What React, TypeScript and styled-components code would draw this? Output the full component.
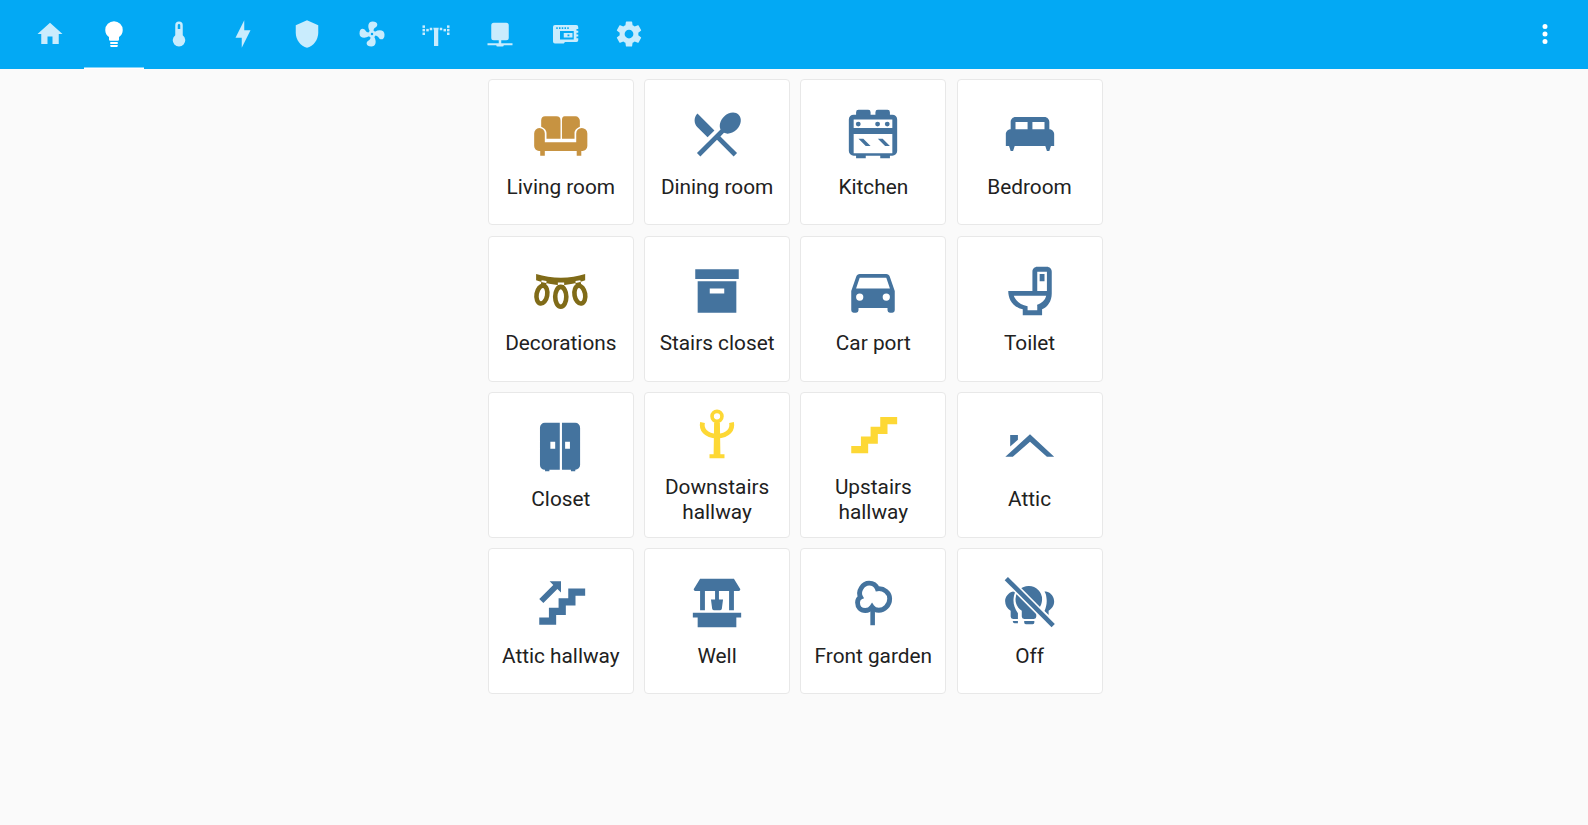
import React from 'react';
import styled, { createGlobalStyle } from 'styled-components';

const Global = createGlobalStyle`
  html, body { margin: 0; padding: 0; height: 100%; background: #fafafa; }
  body { font-family: Roboto, "Liberation Sans", sans-serif; overflow: hidden; }
`;

const Page = styled.div`
  display: flex;
  flex-direction: column;
  min-height: 100vh;
`;

const Toolbar = styled.header`
  display: flex;
  align-items: stretch;
  height: 69px;
  padding: 0 28px 0 20px;
  background: #03a9f4;
  box-sizing: border-box;
`;

const TabList = styled.nav`
  display: flex;
  gap: 4.33px;
`;

const Tab = styled.div<{ $active?: boolean }>`
  display: flex;
  align-items: center;
  justify-content: center;
  width: 60px;
  box-sizing: border-box;
  padding-bottom: 2px;
  color: ${p => (p.$active ? '#ffffff' : '#c9ecfd')};
  box-shadow: ${p => (p.$active ? 'inset 0 -1.5px 0 #ffffff' : 'none')};
`;

const MenuButton = styled.div`
  display: flex;
  align-items: center;
  margin-left: auto;
  padding-bottom: 2px;
  color: #ffffff;
`;

const Grid = styled.main`
  display: grid;
  grid-template-columns: repeat(4, 146px);
  grid-auto-rows: 146px;
  gap: 10.25px;
  justify-content: center;
  padding: 10.3px 0 0 2.4px;
`;

const Card = styled.div`
  display: flex;
  flex-direction: column;
  align-items: center;
  justify-content: center;
  gap: 11.5px;
  box-sizing: border-box;
  padding: 0.5px 8px 0;
  background: #ffffff;
  border: 1px solid #e8e8e8;
  border-radius: 4px;
`;

const Label = styled.div`
  font-size: 20.8px;
  line-height: 25px;
  color: #212121;
  text-align: center;
`;

const Glyph = styled.svg<{ $size: number; $color?: string }>`
  display: block;
  flex: none;
  width: ${p => p.$size}px;
  height: ${p => p.$size}px;
  color: ${p => p.$color || 'inherit'};
  fill: currentColor;
  fill-rule: evenodd;
`;

const BLUE = '#44739e';
const GOLD = '#c79341';
const OLIVE = '#806b18';
const YELLOW = '#fdd835';

const P = ({ d }: { d: string }) => <path d={d} />;

const squares: [number, number][] = [
  [1.2, 5.1], [1.2, 7.9], [1.2, 10.8], [4.2, 7.9], [7, 7], [15, 7], [18, 7.9], [20.8, 5.1], [20.8, 7.9], [20.8, 10.8],
];

const tabs: React.ReactNode[] = [
  <P d="M10,20V14H14V20H19V12H22L12,3L2,12H5V20H10Z" />,
  <P d="M12 1.7A7 7 0 0 0 5 8.7C5 11.1 6.2 13.2 8 14.4V16.4A1 1 0 0 0 9 17.4H15A1 1 0 0 0 16 16.4V14.4C17.8 13.2 19 11.1 19 8.7A7 7 0 0 0 12 1.7ZM9 18.4H15V19.9H9ZM9 20.8H15V21.5A.8.8 0 0 1 14.2 22.3H9.8A.8.8 0 0 1 9 21.5Z" />,
  <P d="M15 13V5A3 3 0 0 0 9 5V13A5 5 0 1 0 15 13M12 4A1 1 0 0 1 13 5V8H11V5A1 1 0 0 1 12 4Z" />,
  <P d="M11 15H6L13 1V9H18L11 23V15Z" />,
  <P d="M12,1L3,5V11C3,16.55 6.84,21.74 12,23C17.16,21.74 21,16.55 21,11V5L12,1Z" />,
  <P d="M12,11A1,1 0 0,0 11,12A1,1 0 0,0 12,13A1,1 0 0,0 13,12A1,1 0 0,0 12,11M12.5,2C17,2 17.11,5.57 14.75,6.75C13.76,7.24 13.32,8.29 13.13,9.22C13.61,9.42 14.03,9.73 14.35,10.13C18.05,8.13 22.03,8.92 22.03,12.5C22.03,17 18.46,17.1 17.28,14.73C16.78,13.74 15.72,13.3 14.79,13.11C14.59,13.59 14.28,14 13.88,14.34C15.87,18.03 15.08,22 11.5,22C7,22 6.91,18.42 9.27,17.24C10.25,16.75 10.69,15.71 10.89,14.79C10.4,14.59 9.97,14.27 9.65,13.87C5.96,15.85 2,15.07 2,11.5C2,7 5.56,6.89 6.74,9.26C7.24,10.25 8.29,10.68 9.22,10.87C9.41,10.39 9.73,9.97 10.14,9.65C8.15,5.96 8.94,2 12.5,2Z" />,
  <>
    <path d="M9.8 7H14.2L13.8 9.3V21.6H10.4V9.3Z" />
    {squares.map(([x, y]) => <rect key={`${x}-${y}`} x={x} y={y} width="2" height="2" />)}
  </>,
  <P d="M7 3H17A2 2 0 0 1 19 5V15A2 2 0 0 1 17 17H13V19.3H22V21H15Q15 22 14 22H10Q9 22 9 21H2V19.3H11V17H7A2 2 0 0 1 5 15V5A2 2 0 0 1 7 3Z" />,
  <P d="M4 4.8H21A1.6 1.6 0 0 1 22.6 6.4V8H21.2V9.4H22.6V11H21.2V12.4H22.6V14H21.2V15.4H22.6V17A1.4 1.4 0 0 1 21.2 18.4H12L11 19.6H4A1.6 1.6 0 0 1 2.4 18V6.4A1.6 1.6 0 0 1 4 4.8ZM5 6.6V8H6.2V6.6ZM7.2 6.6V8H8.4V6.6ZM9.4 6.6V8H10.6V6.6ZM11.6 6.6V8H12.8V6.6ZM13.8 6.6V8H15V6.6ZM8 9.6V16.3H19V9.6ZM11 11.2H18V14.8H11ZM14 12.3V13.7H15.5V12.3Z" />,
  <P d="M12,15.5A3.5,3.5 0 0,1 8.5,12A3.5,3.5 0 0,1 12,8.5A3.5,3.5 0 0,1 15.5,12A3.5,3.5 0 0,1 12,15.5M19.43,12.97C19.47,12.65 19.5,12.33 19.5,12C19.5,11.67 19.47,11.34 19.43,11L21.54,9.37C21.73,9.22 21.78,8.95 21.66,8.73L19.66,5.27C19.54,5.05 19.27,4.96 19.05,5.05L16.56,6.05C16.04,5.66 15.5,5.32 14.87,5.07L14.5,2.42C14.46,2.18 14.25,2 14,2H10C9.75,2 9.54,2.18 9.5,2.42L9.13,5.07C8.5,5.32 7.96,5.66 7.44,6.05L4.95,5.05C4.73,4.96 4.46,5.05 4.34,5.27L2.34,8.73C2.21,8.95 2.27,9.22 2.46,9.37L4.57,11C4.53,11.34 4.5,11.67 4.5,12C4.5,12.33 4.53,12.65 4.57,12.97L2.46,14.63C2.27,14.78 2.21,15.05 2.34,15.27L4.34,18.73C4.46,18.95 4.73,19.03 4.95,18.95L7.44,17.94C7.96,18.34 8.5,18.68 9.13,18.93L9.5,21.58C9.54,21.82 9.75,22 10,22H14C14.25,22 14.46,21.82 14.5,21.58L14.87,18.93C15.5,18.67 16.04,18.34 16.56,17.94L19.05,18.95C19.27,19.03 19.54,18.95 19.66,18.73L21.66,15.27C21.78,15.05 21.73,14.78 21.54,14.63L19.43,12.97Z" />,
];

type Room = { label: React.ReactNode; color: string; icon: React.ReactNode };

const rooms: Room[] = [
  {
    label: 'Living room', color: GOLD,
    icon: <P d="M5.4 4.7H10.1A1.7 1.7 0 0 1 11.8 6.4V14H6V11.8C6 10.7 5.5 9.7 3.8 9V6.3A1.7 1.7 0 0 1 5.4 4.7ZM13.5 4.7H18A1.8 1.8 0 0 1 19.8 6.5V9C18.1 9.7 17.6 10.7 17.6 11.8V14H12.4V6.4A1.1 1.7 0 0 1 13.5 4.7ZM3 9.5A2.3 2.3 0 0 1 5.3 11.8V15.4H18.3V11.8A2.3 2.3 0 0 1 22.9 11.8V17A2 2 0 0 1 20.9 19H20.4V21H18.5V19H5.3V21H3.4V19H2.9A2 2 0 0 1 .9 17V11.8A2.3 2.3 0 0 1 3 9.5Z" />,
  },
  {
    label: 'Dining room', color: BLUE,
    icon: <P d="M14.88,11.53L13.41,13L20.29,19.88L18.88,21.29L12,14.41L5.12,21.29L3.71,19.88L13.47,10.12C12.76,8.59 13.26,6.44 14.85,4.85C16.76,2.93 19.5,2.57 20.96,4.03C22.43,5.5 22.07,8.24 20.15,10.15C18.56,11.74 16.41,12.24 14.88,11.53M8.1,13.34L3.91,9.16C2.35,7.59 2.35,5.06 3.91,3.5L10.93,10.5L8.1,13.34Z" />,
  },
  {
    label: 'Kitchen', color: BLUE,
    icon: <>
      <P d="M4 4H5V3A1 1 0 0 1 6 2H10A1 1 0 0 1 11 3V4H13V3A1 1 0 0 1 14 2H18A1 1 0 0 1 19 3V4H20A2 2 0 0 1 22 6V19A2 2 0 0 1 20 21H19V22H15V21H9V22H5V21H4A2 2 0 0 1 2 19V6A2 2 0 0 1 4 4ZM4 6V9.5H20V6ZM4 12V20H20V12Z" />
      <circle cx="5.9" cy="7.9" r="1" /><circle cx="13.9" cy="7.9" r="1" /><circle cx="17.9" cy="7.9" r="1" />
      <P d="M6 14H8L11 17H9ZM14 14H16L19 17H17Z" />
    </>,
  },
  {
    label: 'Bedroom', color: BLUE,
    icon: <P d="M20 10V7C20 5.9 19.1 5 18 5H6C4.9 5 4 5.9 4 7V10C2.9 10 2 10.9 2 12V17H3.33L4 19H5L5.67 17H18.34L19 19H20L20.67 17H22V12C22 10.9 21.1 10 20 10M11 10H6V7H11V10M18 10H13V7H18V10Z" />,
  },
  {
    label: 'Decorations', color: OLIVE,
    icon: <>
      <P d="M1.7 5C8 7 16 7 22 5V7.6C19 8.7 14.5 9.6 12 9.6C9.5 9.6 5 8.7 1.7 7.6ZM4 7.5L6 7.9L5.8 10.4H3.4ZM10.7 8.5H13.3V10.8H10.7ZM18 7.9L20 7.5L20.6 10.4H18.2Z" />
      <g fill="none" stroke="currentColor" strokeWidth="1.9">
        <ellipse cx="4.1" cy="13.5" rx="2.2" ry="3.7" transform="rotate(10 4.1 13.5)" />
        <ellipse cx="11.9" cy="14.4" rx="2.3" ry="4.1" />
        <ellipse cx="19.8" cy="13.5" rx="2.2" ry="3.7" transform="rotate(-10 19.8 13.5)" />
      </g>
    </>,
  },
  {
    label: 'Stairs closet', color: BLUE,
    icon: <P d="M3 3H21V7H3ZM4 8H20V21H4ZM9 11V13H15V11Z" />,
  },
  {
    label: 'Car port', color: BLUE,
    icon: <P d="M5,11L6.5,6.5H17.5L19,11ZM17.5,16A1.5,1.5 0 0,1 16,14.5A1.5,1.5 0 0,1 17.5,13A1.5,1.5 0 0,1 19,14.5A1.5,1.5 0 0,1 17.5,16ZM6.5,16A1.5,1.5 0 0,1 5,14.5A1.5,1.5 0 0,1 6.5,13A1.5,1.5 0 0,1 8,14.5A1.5,1.5 0 0,1 6.5,16ZM18.92,6C18.72,5.42 18.16,5 17.5,5H6.5C5.84,5 5.28,5.42 5.08,6L3,12V20A1,1 0 0,0 4,21H5A1,1 0 0,0 6,20V19H18V20A1,1 0 0,0 19,21H20A1,1 0 0,0 21,20V12L18.92,6Z" />,
  },
  {
    label: 'Toilet', color: BLUE,
    icon: <P d="M9,22H17V19.58C19.38,18.55 21,16.12 21,13V4C21,2.89 20.1,2 19,2H15C13.89,2 13,2.89 13,4V12H3C3,15.24 4.62,18.55 9,19.58ZM5.29,14H18.71C18.26,15.84 16.73,17.27 14.81,17.75L15,18V20H11V18.31C8.23,17.82 6.17,16.23 5.29,14ZM15,4H19V12H15ZM16,5V8H18V5Z" />,
  },
  {
    label: 'Closet', color: BLUE,
    icon: <P d="M11.5 2V21.4H7.2V22H5.4V21.4A2 2 0 0 1 3.3 19.4V4A2 2 0 0 1 5.3 2ZM12.4 2H17.9A2 2 0 0 1 19.9 4V19.4A2 2 0 0 1 17.9 21.4V22H16.1V21.4H12.4ZM7.6 9.8V12.7H9.6V9.8ZM13.7 9.8V12.7H15.7V9.8Z" />,
  },
  {
    label: <>Downstairs<br />hallway</>, color: YELLOW,
    icon: <>
      <P d="M12 1.9A2.8 2.8 0 1 1 12 7.5A2.8 2.8 0 1 1 12 1.9ZM12 3.4A1.3 1.3 0 1 0 12 6A1.3 1.3 0 1 0 12 3.4Z" />
      <P d="M10.8 7.3H13.2L13.4 20.4H15.1V22H8.9V20.4H10.6Z" />
      <path d="M6 7.2C5.4 10 7.2 12.6 12 12.9C16.8 12.6 18.6 10 18 7.2" fill="none" stroke="currentColor" strokeWidth="2" />
    </>,
  },
  {
    label: <>Upstairs<br />hallway</>, color: YELLOW,
    icon: <P d="M15,5V9H11V13H7V17H3V20H10V16H14V12H18V8H22V5H15Z" />,
  },
  {
    label: 'Attic', color: BLUE,
    icon: <P d="M1.8 16L12 6.7L22 16H19L12 9.8L4.9 16ZM3.8 7H7V9L3.8 11.8Z" />,
  },
  {
    label: 'Attic hallway', color: BLUE,
    icon: <P d="M7.3 3H12V7.7L10.5 6.2L4.7 12L3 10.3L8.8 4.5ZM15 6V10H11V14H7V18H3V21H10V17H14V13H18V9H22V6Z" />,
  },
  {
    label: 'Well', color: BLUE,
    icon: <P d="M5 2H19L21.6 6.2A.6.6 0 0 1 21 7H3A.6.6 0 0 1 2.4 6.2ZM5 7H7V15H5ZM17 7H19V15H17ZM11.2 7H12.8V10.6H14.5L14 14.4A.7.7 0 0 1 13.3 15H10.7A.7.7 0 0 1 10 14.4L9.5 10.6H11.2ZM2 16H22V18H20V22H4V18H2Z" />,
  },
  {
    label: 'Front garden', color: BLUE,
    icon: <>
      <path d="M6.9 9.6C5.5 7.2 7.8 3.8 10.4 3.8C12.2 3.8 13.3 4.8 13.8 6.1C16.6 5.7 18.9 7.9 18.9 10.2C18.9 13 16.6 15 14.4 15C13.3 15 12.2 14.5 11.6 13.6C10.8 14.8 9.7 15.1 8.8 15.1C6.9 15.1 5.6 13.7 5.6 11.8C5.6 10.9 6.1 10 6.9 9.6Z" fill="none" stroke="currentColor" strokeWidth="2" />
      <path d="M10.9 14.4H12.8V21.2H10.9Z" />
    </>,
  },
  {
    label: 'Off', color: BLUE,
    icon: <>
      <P d="M5 7.2C3 7.6 1.7 9.5 1.7 11.2C1.7 13 2.6 14.4 4 15.2V17.6A1 1 0 0 0 5 18.6H7V16.2C5.6 14.2 5 12.2 5.2 10.2C5.3 9.2 5.5 8 6 7.3ZM4.9 19.4H7V20.4H5.6A.7.7 0 0 1 4.9 19.7ZM18.6 7.2C20.8 7.6 22 9.5 22 11.4C22 13.2 21 14.4 19.7 15.2V17L18 15.3C18.6 14 19 12.4 18.9 10.8C18.8 9.2 18.6 8 18 7.2Z" />
      <P d="M11.6 5A5.4 5.4 0 0 1 17 10.4C17 12.4 16 14.2 14.6 15.2V17.6A1 1 0 0 1 13.6 18.6H9.6A1 1 0 0 1 8.6 17.6V15.2C7 14.2 6 12.4 6 10.4A5.4 5.4 0 0 1 11.6 5ZM9.6 19.4H13.8V20.1A.7.7 0 0 1 13.1 20.8H10.3A.7.7 0 0 1 9.6 20.1Z" />
      <path d="M2.2 1.9L21.6 21.4" fill="none" stroke="#ffffff" strokeWidth="3.2" />
      <path d="M2.2 1.9L21.6 21.4" fill="none" stroke="currentColor" strokeWidth="1.9" />
    </>,
  },
];

export default function App() {
  return (
    <Page>
      <Global />
      <Toolbar>
        <TabList>
          {tabs.map((icon, i) => (
            <Tab key={i} $active={i === 1}>
              <Glyph viewBox="0 0 24 24" $size={30}>{icon}</Glyph>
            </Tab>
          ))}
        </TabList>
        <MenuButton>
          <Glyph viewBox="0 0 24 24" $size={30}>
            <P d="M12,16A2,2 0 0,1 14,18A2,2 0 0,1 12,20A2,2 0 0,1 10,18A2,2 0 0,1 12,16M12,10A2,2 0 0,1 14,12A2,2 0 0,1 12,14A2,2 0 0,1 10,12A2,2 0 0,1 12,10M12,4A2,2 0 0,1 14,6A2,2 0 0,1 12,8A2,2 0 0,1 10,6A2,2 0 0,1 12,4Z" />
          </Glyph>
        </MenuButton>
      </Toolbar>
      <Grid>
        {rooms.map((r, i) => (
          <Card key={i}>
            <Glyph viewBox="0 0 24 24" $size={58} $color={r.color}>{r.icon}</Glyph>
            <Label>{r.label}</Label>
          </Card>
        ))}
      </Grid>
    </Page>
  );
}
